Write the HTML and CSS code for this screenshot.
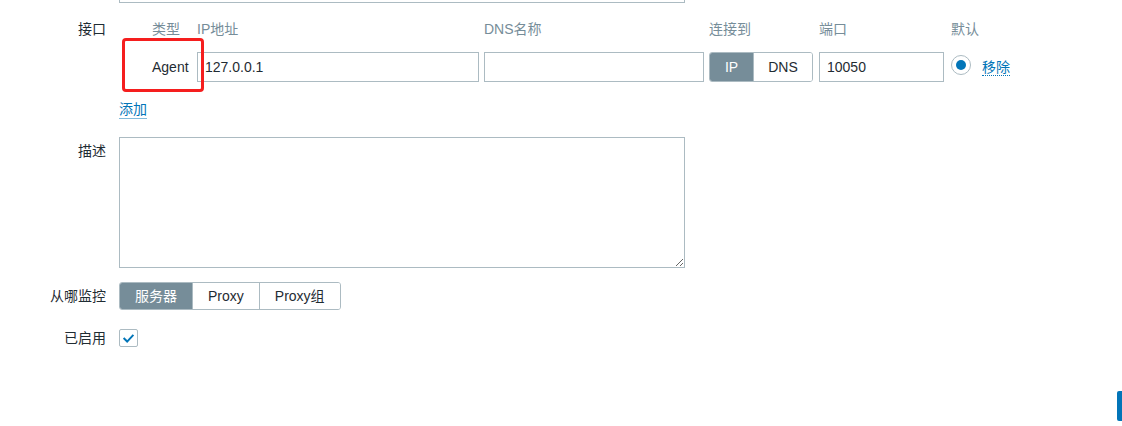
FILE: index.html
```html
<!DOCTYPE html>
<html lang="zh-CN">
<head>
    <meta charset="UTF-8">
    <title>主机</title>
    <link rel="stylesheet" href="styles.css">
</head>
<body>
    <div class="top-field"></div>

    <div class="form">
        <div class="form-row row-interfaces">
            <div class="form-label">接口</div>
            <div class="form-field">
                <div class="interfaces">
                    <div class="iface-grid">
                        <span></span>
                        <span class="th">类型</span>
                        <span class="th">IP地址</span>
                        <span class="th">DNS名称</span>
                        <span class="th">连接到</span>
                        <span class="th">端口</span>
                        <span class="th">默认</span>

                        <span></span>
                        <span class="iface-type">Agent</span>
                        <input class="text-input ip-input" type="text" value="127.0.0.1">
                        <input class="text-input dns-input" type="text" value="">
                        <div class="seg seg-connect">
                            <span class="seg-item seg-ip selected">IP</span>
                            <span class="seg-item seg-dns">DNS</span>
                        </div>
                        <input class="text-input port-input" type="text" value="10050">
                        <div class="iface-default">
                            <span class="radio"><span class="radio-dot"></span></span>
                            <a class="link-action" href="#">移除</a>
                        </div>
                    </div>
                    <div class="highlight"></div>
                </div>
                <a class="link add-link" href="#">添加</a>
            </div>
        </div>

        <div class="form-row row-description">
            <div class="form-label">描述</div>
            <div class="form-field">
                <textarea class="textarea"></textarea>
            </div>
        </div>

        <div class="form-row row-monitored">
            <div class="form-label">从哪监控</div>
            <div class="form-field">
                <div class="seg seg-monitored">
                    <span class="seg-item selected">服务器</span>
                    <span class="seg-item">Proxy</span>
                    <span class="seg-item">Proxy组</span>
                </div>
            </div>
        </div>

        <div class="form-row row-enabled">
            <div class="form-label">已启用</div>
            <div class="form-field">
                <span class="checkbox">
                    <svg width="18" height="18" viewBox="0 0 18 18">
                        <path d="M3.5 9 L7.5 13 L14.5 5.5" fill="none" stroke="#0275b8" stroke-width="2.2"/>
                    </svg>
                </span>
            </div>
        </div>
    </div>

    <div class="side-tab"></div>
</body>
</html>
```

FILE: styles.css
```css
body {
    margin: 0;
    background: #fff;
    color: #1f2c33;
    font-family: "Liberation Sans", "Noto Sans CJK SC", sans-serif;
    font-size: 14px;
}
.top-field {
    margin-left: 119px;
    width: 564px;
    height: 2px;
    border: 1px solid #acbbc2;
    border-top: none;
}
.form-row {
    display: grid;
    grid-template-columns: 106px 1fr;
    column-gap: 13px;
}
.form-label {
    text-align: right;
    line-height: 18px;
}
.row-interfaces {
    margin-top: 17px;
}
.row-description {
    margin-top: 18px;
}
.row-description .form-label {
    padding-top: 5px;
}
.row-monitored {
    margin-top: 14px;
}
.row-monitored .form-label {
    line-height: 28px;
}
.row-enabled {
    margin-top: 14px;
}
.row-enabled .form-label {
    line-height: 28px;
}
.row-enabled .form-field {
    display: flex;
    align-items: center;
    height: 28px;
}

/* interfaces table */
.interfaces {
    position: relative;
}
.iface-grid {
    display: grid;
    grid-template-columns: 33px 45px 287px 225px 110px 132px auto;
    grid-template-rows: 18px 30px;
    row-gap: 14px;
    align-items: center;
}
.th {
    color: #768d99;
    line-height: 18px;
}
.iface-type {
    line-height: 30px;
}
.text-input {
    box-sizing: border-box;
    height: 30px;
    border: 1px solid #acbbc2;
    border-radius: 0;
    padding: 0 7px;
    font-family: inherit;
    font-size: 14px;
    color: #1f2c33;
    background: #fff;
    outline: none;
}
.ip-input {
    width: 282px;
}
.dns-input {
    width: 220px;
}
.port-input {
    width: 125px;
}
.seg {
    display: inline-flex;
    border: 1px solid #acbbc2;
    border-radius: 3px;
    overflow: hidden;
    box-sizing: border-box;
}
.seg-item {
    padding: 0 15px;
    border-left: 1px solid #acbbc2;
    color: #1f2c33;
    background: #fff;
}
.seg-item:first-child {
    border-left: none;
}
.seg-item.selected {
    background: #768d99;
    border-color: #768d99;
    color: #fff;
}
.seg-connect {
    width: 104px;
    height: 30px;
}
.seg-connect .seg-item {
    line-height: 28px;
    padding: 0;
    text-align: center;
}
.seg-ip {
    width: 43px;
}
.seg-dns {
    flex: 1;
}
.seg-monitored {
    height: 28px;
}
.seg-monitored .seg-item {
    line-height: 26px;
}
.iface-default {
    display: flex;
    align-items: center;
}
.radio {
    box-sizing: border-box;
    width: 20px;
    height: 20px;
    border: 1px solid #acbbc2;
    border-radius: 50%;
    display: flex;
    align-items: center;
    justify-content: center;
    margin-top: -4px;
}
.radio-dot {
    width: 10px;
    height: 10px;
    border-radius: 50%;
    background: #0275b8;
}
.link-action {
    margin-left: 11px;
    color: #0275b8;
    text-decoration: none;
    border-bottom: 1px dotted #0275b8;
    line-height: 16px;
}
.link {
    color: #0275b8;
    text-decoration: none;
    border-bottom: 1px solid rgba(2, 117, 184, 0.5);
}
.add-link {
    display: inline-block;
    margin-top: 19px;
    line-height: 17px;
}
.highlight {
    position: absolute;
    left: 3px;
    top: 18px;
    width: 82px;
    height: 54px;
    box-sizing: border-box;
    border: 3px solid #f51e1e;
    border-radius: 4px;
}

.textarea {
    display: block;
    box-sizing: border-box;
    width: 566px;
    height: 131px;
    border: 1px solid #acbbc2;
    border-radius: 0;
    margin: 0;
    padding: 5px 7px;
    font-family: inherit;
    font-size: 14px;
    outline: none;
}

.checkbox {
    box-sizing: border-box;
    width: 19px;
    height: 18px;
    border: 1px solid #acbbc2;
    border-radius: 2px;
    display: flex;
    align-items: center;
    justify-content: center;
}
.checkbox svg {
    width: 17px;
    height: 16px;
}

.side-tab {
    position: fixed;
    right: 0;
    top: 391px;
    width: 5px;
    height: 30px;
    background: #0275b8;
    border-radius: 2px 0 0 2px;
}
```
